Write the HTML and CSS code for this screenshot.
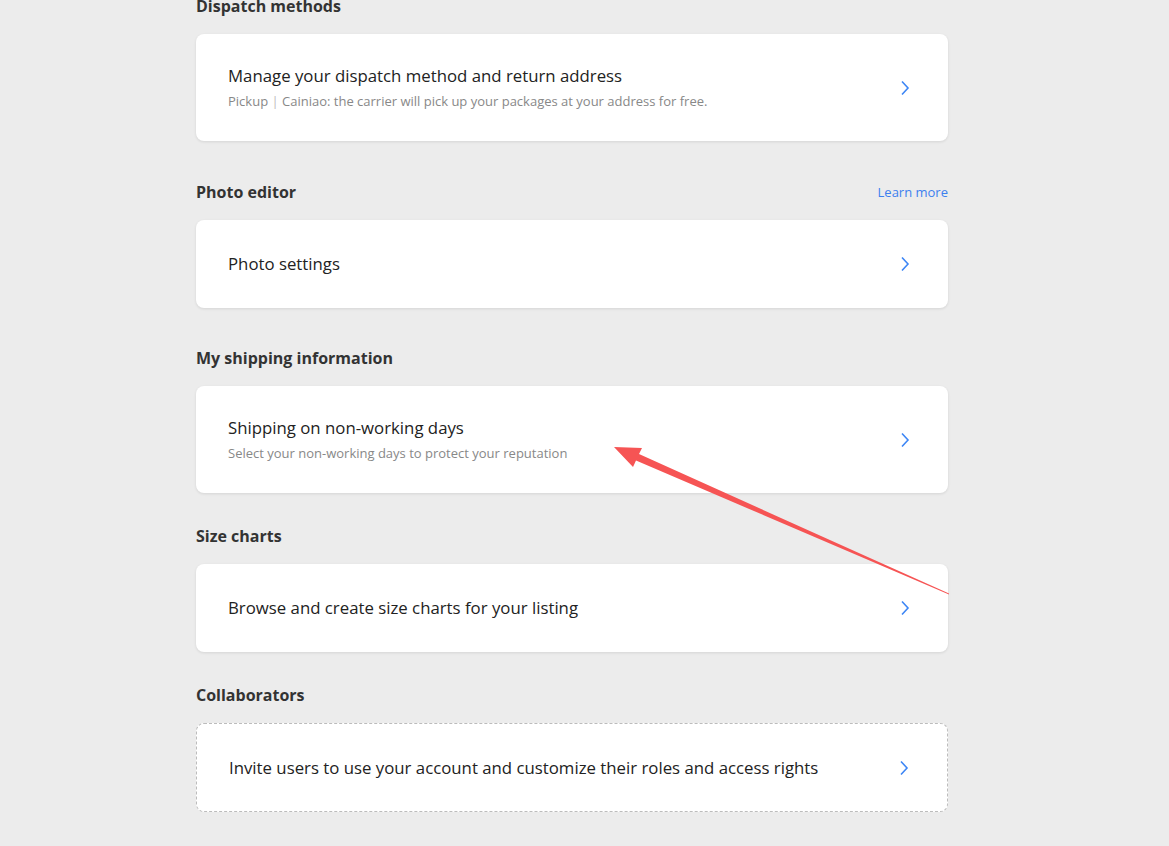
FILE: index.html
```html
<!DOCTYPE html>
<html lang="en">
<head>
    <meta charset="UTF-8">
    <meta name="viewport" content="width=device-width, initial-scale=1.0">
    <title>Settings</title>
    <link rel="stylesheet" href="styles.css">
</head>
<body>
    <div class="settings">
        <section class="settings-section">
            <div class="section-head">
                <h2>Dispatch methods</h2>
            </div>
            <a href="#" class="setting-card">
                <div class="card-text">
                    <div class="card-title">Manage your dispatch method and return address</div>
                    <div class="card-sub">Pickup <span class="sep">|</span> Cainiao: the carrier will pick up your packages at your address for free.</div>
                </div>
                <svg class="chevron" width="10" height="16" viewBox="0 0 10 16"><path d="M2 1.5 L8 8 L2 14.5" /></svg>
            </a>
        </section>

        <section class="settings-section short">
            <div class="section-head">
                <h2>Photo editor</h2>
                <a href="#" class="learn-more">Learn more</a>
            </div>
            <a href="#" class="setting-card single">
                <div class="card-text">
                    <div class="card-title">Photo settings</div>
                </div>
                <svg class="chevron" width="10" height="16" viewBox="0 0 10 16"><path d="M2 1.5 L8 8 L2 14.5" /></svg>
            </a>
        </section>

        <section class="settings-section tight">
            <div class="section-head">
                <h2>My shipping information</h2>
            </div>
            <a href="#" class="setting-card">
                <div class="card-text">
                    <div class="card-title">Shipping on non-working days</div>
                    <div class="card-sub">Select your non-working days to protect your reputation</div>
                </div>
                <svg class="chevron" width="10" height="16" viewBox="0 0 10 16"><path d="M2 1.5 L8 8 L2 14.5" /></svg>
            </a>
        </section>

        <section class="settings-section tight">
            <div class="section-head">
                <h2>Size charts</h2>
            </div>
            <a href="#" class="setting-card single">
                <div class="card-text">
                    <div class="card-title">Browse and create size charts for your listing</div>
                </div>
                <svg class="chevron" width="10" height="16" viewBox="0 0 10 16"><path d="M2 1.5 L8 8 L2 14.5" /></svg>
            </a>
        </section>

        <section class="settings-section">
            <div class="section-head">
                <h2>Collaborators</h2>
            </div>
            <a href="#" class="setting-card single dashed">
                <div class="card-text">
                    <div class="card-title">Invite users to use your account and customize their roles and access rights</div>
                </div>
                <svg class="chevron" width="10" height="16" viewBox="0 0 10 16"><path d="M2 1.5 L8 8 L2 14.5" /></svg>
            </a>
        </section>
    </div>

    <!-- red pointer drawn over the page -->
    <svg class="pointer" width="1169" height="846" viewBox="0 0 1169 846">
        <polygon points="614,447 642,448 639,454 949,593.6 949,594.6 636,460.5 633,467" />
    </svg>
</body>
</html>
```

FILE: styles.css
```css
body {
    margin: 0;
    padding: 0;
    background-color: #ececec;
    font-family: "Open Sans", "Liberation Sans", sans-serif;
    color: #222;
}
.settings {
    width: 752px;
    margin: -6px 0 0 196px;
}
.settings-section { margin-bottom: 39px; }
.settings-section.short { margin-bottom: 38px; }
.settings-section.tight { margin-bottom: 31px; }
.section-head {
    display: flex;
    justify-content: space-between;
    align-items: center;
    height: 24px;
    margin-bottom: 16px;
}
h2 {
    margin: 0;
    font-size: 16px;
    font-weight: 700;
    color: #333;
    line-height: 24px;
}
.learn-more {
    font-size: 13px;
    color: #3d80ef;
    text-decoration: none;
}
.setting-card {
    display: flex;
    align-items: center;
    justify-content: space-between;
    box-sizing: border-box;
    background-color: white;
    border-radius: 8px;
    box-shadow: 0 1px 3px rgba(0, 0, 0, 0.1);
    padding: 31px 38px 31px 32px;
    text-decoration: none;
    color: inherit;
}
.setting-card.single {
    padding-top: 0;
    padding-bottom: 0;
    height: 88px;
}
.setting-card.dashed {
    height: 89px;
    border: 1px dashed #bcbcbc;
    box-shadow: none;
}
.card-title {
    font-size: 16.8px;
    line-height: 22px;
    color: #222;
}
.card-sub {
    margin-top: 5px;
    font-size: 13px;
    line-height: 18px;
    color: #888;
}
.sep { color: #bbb; }
.chevron path {
    fill: none;
    stroke: #3d86f5;
    stroke-width: 1.6;
}
.pointer {
    position: absolute;
    top: 0;
    left: 0;
    pointer-events: none;
}
.pointer polygon { fill: #f65454; }
```
